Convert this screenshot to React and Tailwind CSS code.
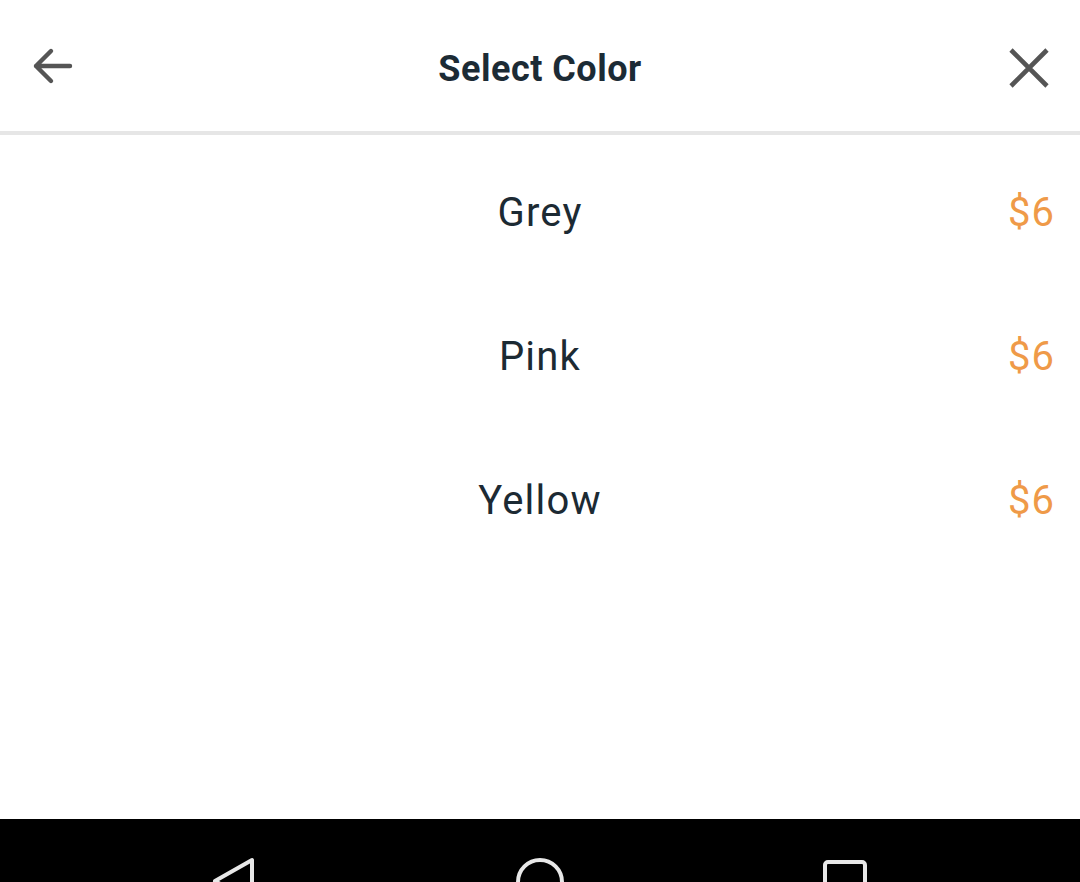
import React from "react";

const rows = [
  { name: "Grey", price: "$6" },
  { name: "Pink", price: "$6" },
  { name: "Yellow", price: "$6" },
];

export default function App() {
  return (
    <div
      className="w-[1080px] h-[882px] bg-white flex flex-col overflow-hidden"
      style={{ fontFamily: "Roboto, 'Noto Sans', sans-serif" }}
    >
      <div className="h-[131px] flex items-center justify-between px-[30px] shrink-0">
        <svg width="44" height="44" viewBox="0 0 44 44" fill="none">
          <path
            d="M40 22H6M21 7L6 22L21 37"
            stroke="#555555"
            strokeWidth="4.4"
            strokeLinecap="round"
            strokeLinejoin="round"
          />
        </svg>
        <div className="text-[36px] font-bold text-[#1c2b35] tracking-[0.5px] pt-[7px]">Select Color</div>
        <svg width="44" height="44" viewBox="0 0 44 44" fill="none">
          <path
            d="M5 6L41 42M41 6L5 42"
            stroke="#555555"
            strokeWidth="4.6"
            strokeLinecap="butt"
          />
        </svg>
      </div>
      <div className="h-[4px] bg-[#e6e6e6] shrink-0" />
      <div className="flex-1 flex flex-col pt-[6px]">
        {rows.map((r) => (
          <div key={r.name} className="h-[144px] relative flex items-center justify-center">
            <span className="text-[40px] tracking-[1.2px] text-[#1c2a33]">{r.name}</span>
            <span className="absolute right-[25px] text-[40px] tracking-[1px] text-[#ef9a48]">{r.price}</span>
          </div>
        ))}
      </div>
      <div className="h-[63px] bg-black shrink-0 flex justify-center gap-[257px] pt-[38px] overflow-hidden">
        <svg width="48" height="48" viewBox="0 0 48 48" fill="none">
          <path
            d="M41 3L41 45L4 24Z"
            stroke="#e8e8e8"
            strokeWidth="4"
            strokeLinejoin="round"
          />
        </svg>
        <svg width="48" height="48" viewBox="0 0 48 48" fill="none">
          <circle cx="24" cy="25" r="22" stroke="#e8e8e8" strokeWidth="4" />
        </svg>
        <svg width="48" height="48" viewBox="0 0 48 48" fill="none">
          <rect x="4" y="5" width="40" height="40" rx="3" stroke="#e8e8e8" strokeWidth="4" />
        </svg>
      </div>
    </div>
  );
}
